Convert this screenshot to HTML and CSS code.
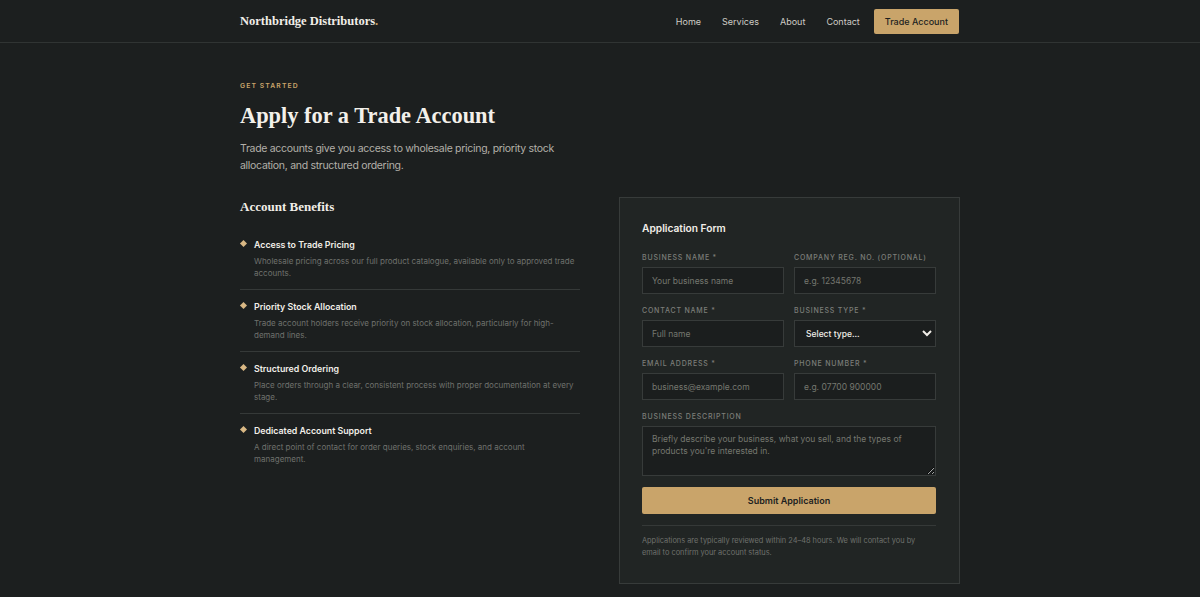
FILE: index.html
```html
<!DOCTYPE html>
<html>
<head>
  <meta charset="utf-8">
  <title>Apply for a Trade Account - Northbridge Distributors</title>
  <meta name="viewport" content="width=device-width, initial-scale=1">
  <link rel="stylesheet" href="styles.css">
</head>
<body>

  <header class="site-header">
    <div class="wrap header-inner">
      <a class="logo" href="#">Northbridge Distributors<span>.</span></a>
      <nav class="nav">
        <a href="#">Home</a>
        <a href="#">Services</a>
        <a href="#">About</a>
        <a href="#">Contact</a>
        <a href="#" class="nav-btn">Trade Account</a>
      </nav>
    </div>
  </header>

  <main class="wrap">
    <section class="intro">
      <p class="eyebrow">Get Started</p>
      <h1>Apply for a Trade Account</h1>
      <p class="lead">Trade accounts give you access to wholesale pricing, priority stock allocation, and structured ordering.</p>
    </section>

    <div class="columns">
      <section class="benefits">
        <h2>Account Benefits</h2>
        <ul class="benefit-list">
          <li>
            <h3>Access to Trade Pricing</h3>
            <p>Wholesale pricing across our full product catalogue, available only to approved trade accounts.</p>
          </li>
          <li>
            <h3>Priority Stock Allocation</h3>
            <p>Trade account holders receive priority on stock allocation, particularly for high-demand lines.</p>
          </li>
          <li>
            <h3>Structured Ordering</h3>
            <p>Place orders through a clear, consistent process with proper documentation at every stage.</p>
          </li>
          <li>
            <h3>Dedicated Account Support</h3>
            <p>A direct point of contact for order queries, stock enquiries, and account management.</p>
          </li>
        </ul>
      </section>

      <form class="card" action="">
        <h2 class="card-title">Application Form</h2>
        <div class="fields">
          <label class="field">
            <span>Business Name *</span>
            <input type="text" placeholder="Your business name">
          </label>
          <label class="field">
            <span>Company Reg. No. (Optional)</span>
            <input type="text" placeholder="e.g. 12345678">
          </label>
          <label class="field">
            <span>Contact Name *</span>
            <input type="text" placeholder="Full name">
          </label>
          <label class="field">
            <span>Business Type *</span>
            <select>
              <option>Select type...</option>
              <option>Retailer</option>
              <option>Wholesaler</option>
              <option>Other</option>
            </select>
          </label>
          <label class="field">
            <span>Email Address *</span>
            <input type="email" placeholder="business@example.com">
          </label>
          <label class="field">
            <span>Phone Number *</span>
            <input type="tel" placeholder="e.g. 07700 900000">
          </label>
          <label class="field full">
            <span>Business Description</span>
            <textarea placeholder="Briefly describe your business, what you sell, and the types of products you're interested in."></textarea>
          </label>
        </div>
        <button type="button" class="submit">Submit Application</button>
        <p class="note">Applications are typically reviewed within 24–48 hours. We will contact you by email to confirm your account status.</p>
      </form>
    </div>
  </main>

</body>
</html>
```

FILE: styles.css
```css
* {
  box-sizing: border-box;
}
body {
  margin: 0;
  background: #1c1f1f;
  color: #ece8e1;
  font-family: Inter, "Noto Sans", sans-serif;
}
a {
  color: inherit;
  text-decoration: none;
}
.wrap {
  width: 720px;
  margin: 0 auto;
}

/* header */
.site-header {
  border-bottom: 1px solid #303433;
}
.header-inner {
  height: 42px;
  display: flex;
  align-items: center;
  justify-content: space-between;
}
.logo {
  font-family: "Liberation Serif", serif;
  font-weight: bold;
  font-size: 12.5px;
  color: #f1eee8;
}
.logo span {
  color: #c9a46a;
}
.nav {
  display: flex;
  align-items: center;
  gap: 21px;
  padding-right: 1px;
  font-size: 9px;
  color: #cfccc6;
}
.nav-btn {
  margin-left: -7px;
  padding: 7px 11px;
  background: #c9a46a;
  color: #1c1f1f;
  border-radius: 2px;
  font-weight: 500;
}

/* intro */
.intro {
  padding-top: 38px;
}
.eyebrow {
  margin: 0;
  font-size: 6.8px;
  font-weight: 600;
  letter-spacing: 1.1px;
  text-transform: uppercase;
  color: #c9a46a;
}
h1 {
  margin: 11px 0 0;
  font-family: "Liberation Serif", serif;
  font-size: 22.4px;
  line-height: 30px;
  color: #f3f0ea;
}
.lead {
  margin: 9px 0 0;
  max-width: 322px;
  font-size: 10.5px;
  letter-spacing: -0.3px;
  line-height: 17px;
  color: #b3b0a9;
}

/* columns */
.columns {
  display: grid;
  grid-template-columns: 340px 341px;
  justify-content: space-between;
  align-items: start;
  margin-top: 24px;
}
.benefits h2 {
  margin: 0;
  padding-top: 1px;
  font-family: "Liberation Serif", serif;
  font-size: 13px;
  color: #f1eee8;
}
.benefit-list {
  list-style: none;
  margin: 24px 0 0;
  padding: 0;
}
.benefit-list li {
  position: relative;
  padding: 0 0 10px 14px;
  margin-bottom: 11px;
  border-bottom: 1px solid #353938;
}
.benefit-list li:last-child {
  border-bottom: none;
}
.benefit-list li::before {
  content: "";
  position: absolute;
  left: 1px;
  top: 2px;
  width: 5px;
  height: 5px;
  background: #d9b884;
  transform: rotate(45deg);
}
.benefit-list h3 {
  margin: 0;
  font-size: 8.8px;
  font-weight: 600;
  line-height: 12px;
  color: #f1eee8;
}
.benefit-list p {
  margin: 4px 0 0;
  padding-right: 4px;
  font-size: 8px;
  line-height: 12px;
  color: #6f716d;
}

/* form card */
.card {
  margin-top: -1px;
  padding: 24px 23px 24px 22px;
  background: #212524;
  border: 1px solid #373b3a;
}
.card-title {
  margin: 0;
  font-size: 10.2px;
  font-weight: 600;
  color: #f1eee8;
}
.fields {
  display: grid;
  grid-template-columns: 1fr 1fr;
  gap: 12px 10px;
  margin-top: 19px;
}
.field {
  display: flex;
  flex-direction: column;
  gap: 5px;
  min-width: 0;
}
.field.full {
  grid-column: 1 / -1;
}
.field span {
  font-size: 7px;
  font-weight: 500;
  letter-spacing: 0.8px;
  text-transform: uppercase;
  color: #7c7e79;
}
.field input,
.field select,
.field textarea {
  width: 100%;
  min-width: 0;
  height: 27px;
  padding: 0 9px;
  background: #1b1e1e;
  border: 1px solid #373b3a;
  color: #ece8e1;
  font-family: inherit;
  font-size: 8.5px;
  border-radius: 0;
  outline: none;
}
.field select {
  color: #f1eee8;
  font-weight: 500;
  padding: 0 4px 0 7px;
}
.field textarea {
  height: 50px;
  padding: 6px 9px;
  line-height: 12px;
  resize: vertical;
}
.field ::placeholder {
  color: #75776f;
}
.submit {
  display: block;
  width: 100%;
  height: 27px;
  margin-top: 11px;
  background: #c9a46a;
  border: none;
  border-radius: 2px;
  color: #1c1f1f;
  font-family: inherit;
  font-size: 9px;
  font-weight: 600;
  cursor: pointer;
}
.note {
  margin: 11px 0 0;
  padding: 9px 12px 0 0;
  border-top: 1px solid #353938;
  font-size: 7.4px;
  line-height: 12px;
  color: #6f716d;
}
```
